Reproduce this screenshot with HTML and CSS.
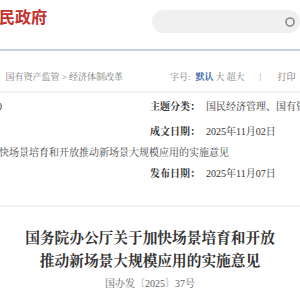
FILE: index.html
```html
<!DOCTYPE html>
<html>
<head>
    <meta charset="utf-8" />
    <title>国务院办公厅关于加快场景培育和开放推动新场景大规模应用的实施意见</title>
    <link rel="stylesheet" href="styles.css">
</head>
<body>
<div class="top">
    <div class="logo">中央人民政府</div>
    <div class="search">
        <svg class="search-icon" width="12" height="12" viewBox="0 0 12 12">
            <circle cx="6" cy="6" r="4" fill="none" stroke="#8a8a8a" stroke-width="1.6"/>
        </svg>
    </div>
</div>
<div class="nav-line"></div>
<div class="crumbs">
    <div class="crumb-path"><span>主题分类：国民经济管理、国有资产监管 &gt; 经济体制改革</span></div>
    <div class="tools">
        <span>字号:</span>
        <a class="on">默认</a>
        <a>大</a>
        <a>超大</a>
        <span class="sep">|</span>
        <a>打印</a>
        <span class="sep">|</span>
    </div>
</div>
<div class="info">
    <div class="info-grid">
        <div class="lab">索引号：</div>
        <div class="val">000014349/2025-00120</div>
        <div class="lab">主题分类：</div>
        <div class="val">国民经济管理、国有资产监管\经济体制改革</div>

        <div class="lab">发文机关：</div>
        <div class="val">国务院办公厅</div>
        <div class="lab">成文日期：</div>
        <div class="val">2025年11月02日</div>

        <div class="lab">标题：</div>
        <div class="val title-val">国务院办公厅关于加快场景培育和开放推动新场景大规模应用的实施意见</div>

        <div class="lab">发文字号：</div>
        <div class="val">国办发〔2025〕37号</div>
        <div class="lab">发布日期：</div>
        <div class="val">2025年11月07日</div>
    </div>
</div>
<div class="article">
    <h1>国务院办公厅关于加快场景培育和开放推动新场景大规模应用的实施意见</h1>
    <div class="doc-no">国办发〔2025〕37号</div>
</div>
</body>
</html>
```
FILE: styles.css
```css
*{margin:0;padding:0;box-sizing:border-box;}
body{width:300px;overflow:hidden;background:#fff;font-family:"Liberation Serif","Noto Serif CJK SC","Noto Sans CJK SC",serif;color:#333;}

.top{display:flex;align-items:flex-start;height:49px;}
.logo{margin:6px 0 0 -49px;font:bold 16px/20px "Noto Sans CJK SC",sans-serif;color:#c6302c;white-space:nowrap;}
.search{margin:10px 0 0 auto;width:148px;height:23px;border-radius:12px;background:#f0f0f0;display:flex;align-items:center;justify-content:flex-end;padding-right:4px;flex-shrink:0;}
.nav-line{height:2px;background:#c6d2e3;}

.crumbs{display:flex;align-items:center;height:42px;padding-top:10px;border-bottom:2px solid #f2f2f2;font-size:9px;color:#777;white-space:nowrap;}
.crumb-path{width:123px;display:flex;justify-content:flex-end;flex-shrink:0;}
.tools{display:flex;align-items:center;margin-left:47px;color:#777;font-size:9px;}
.tools a{margin-left:2px;}
.tools a.on{color:#2a5aa0;font-weight:bold;margin-left:5px;}
.tools .sep{color:#999;margin:0 14px 0 15px;}

.info{border-bottom:2px solid #f0f0f0;padding:3px 0 21px;}
.info-grid{display:grid;grid-template-columns:60px 244px 56px 1fr;grid-template-rows:25px 21px 21px 21px;margin-left:-154px;width:520px;font-size:10px;line-height:21px;white-space:nowrap;}
.lab{font-weight:bold;color:#333;}
.val{color:#333;overflow:hidden;}
.title-val{grid-column:2 / 5;color:#444;padding-left:3px;}

.article{padding:20px 20px 0;text-align:center;}
.article h1{font-size:14.7px;line-height:23px;font-weight:bold;color:#333;}
.doc-no{margin-top:4px;font-size:10px;line-height:14px;color:#666;}
```
